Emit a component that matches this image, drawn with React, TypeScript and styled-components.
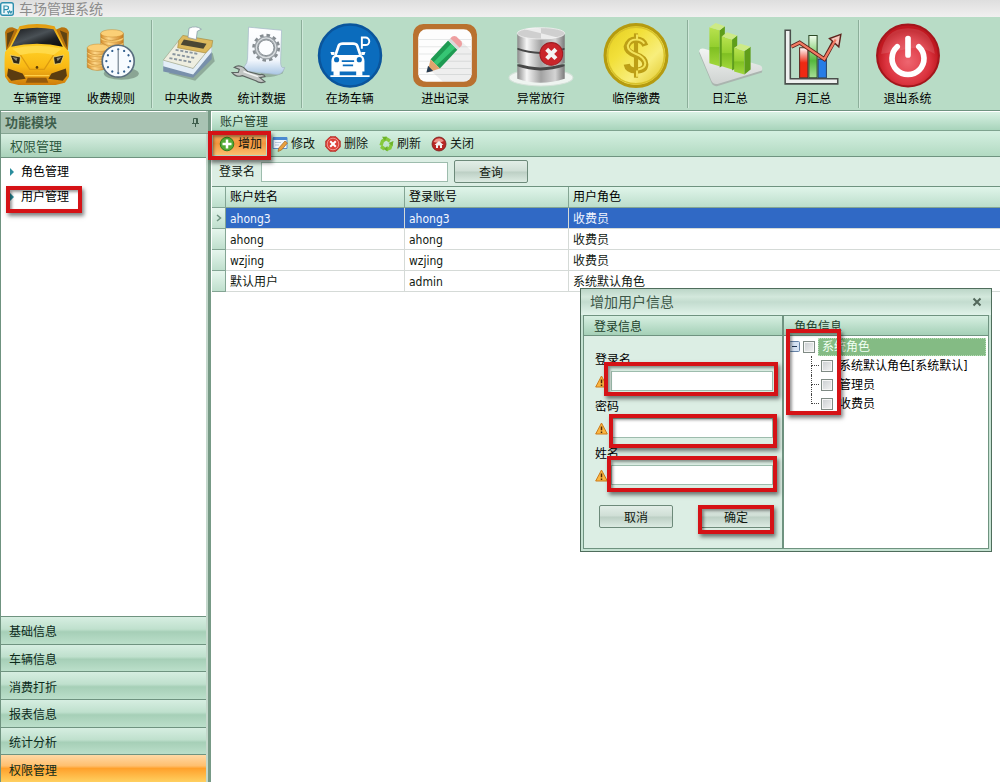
import React, { useState } from "react";
import styled, { createGlobalStyle, css } from "styled-components";

const GlobalStyle = createGlobalStyle`
  *, *::before, *::after { box-sizing: border-box; }
  body {
    margin: 0;
    background: #fff;
    color: #101810;
    font: 12px/16px "DejaVu Sans Condensed", "Noto Sans CJK SC", sans-serif;
  }
  button, input { font: inherit; color: inherit; }
  button { padding: 0; border: 0; background: none; cursor: pointer; }
  ul { list-style: none; margin: 0; padding: 0; }
  h1, h2, h3 { margin: 0; font-weight: normal; }
`;

const line = "#6f9380";

const Page = styled.div`
  position: relative;
  display: flex;
  flex-direction: column;
  min-height: 100vh;
`;

const TitleBar = styled.header`
  display: flex;
  align-items: center;
  gap: 5px;
  height: 17px;
  overflow: hidden;
  background: linear-gradient(#dedede, #f1f0f0);
  h1 { font-size: 14px; line-height: 16px; color: #8c8c8c; }
  svg { flex: none; }
`;

const Ribbon = styled.nav`
  display: flex;
  height: 94px;
  padding-top: 3px;
  background: #b8dcc6;
  border-bottom: 1px solid ${line};
`;

const RibbonGroup = styled.div<{ $width: number; $last?: boolean }>`
  display: flex;
  flex: 0 0 ${(p) => p.$width}px;
  height: 88px;
  padding-right: 3px;
  ${(p) => !p.$last && css`
    border-right: 1px solid #8cae9a;
    box-shadow: 1px 0 0 #cfe9da;
  `}
`;

const RibbonButton = styled.button`
  display: flex;
  flex: 1;
  flex-direction: column;
  align-items: center;
  gap: 3px;
  padding-top: 2px;
  color: #000;
  svg { display: block; flex: none; }
`;

const Body = styled.div`
  display: flex;
  flex: 1;
`;

const Sidebar = styled.aside`
  display: flex;
  flex-direction: column;
  flex: 0 0 211px;
  padding-top: 1px;
  border-left: 1px solid ${line};
  border-right: 3px solid #779a86;
  box-shadow: inset -2px 0 0 #c4d8cc;
`;

const SidebarTitle = styled.div`
  display: flex;
  align-items: center;
  justify-content: space-between;
  height: 22px;
  padding: 0 8px 0 4px;
  background: #a9c3b3;
  border-bottom: 1px solid #86a593;
  color: #3f5f4d;
  h2 { font-size: 13px; font-weight: bold; }
`;

const SectionTitle = styled.h3`
  height: 24px;
  margin-right: 2px;
  padding-left: 9px;
  font-size: 13px;
  line-height: 26px;
  color: #2f5a41;
  background: linear-gradient(#d8efe2, #a9d2ba);
  border-bottom: 1px solid ${line};
`;

const ModuleList = styled.ul`
  flex: 1;
  margin-right: 2px;
  padding-top: 1px;
  background: #fff;
`;

const ModuleLink = styled.a`
  display: flex;
  align-items: center;
  gap: 6px;
  height: 25px;
  padding-left: 9px;
  color: #000;
  text-decoration: none;
  &::before {
    content: "";
    border-left: 4px solid #2a8d9d;
    border-top: 4px solid transparent;
    border-bottom: 4px solid transparent;
    margin-right: 1px;
  }
`;

const NavStack = styled.div`
  display: grid;
  grid-auto-rows: 1fr;
  height: 166px;
  margin-right: 2px;
`;

const NavButton = styled.button<{ $active?: boolean }>`
  padding: 4px 0 0 8px;
  text-align: left;
  border-top: 1px solid ${line};
  color: #0c2a1a;
  background: ${(p) => p.$active
    ? "linear-gradient(#ffd9a6, #ffbf6e 40%, #ffa12c 50%, #ffd060)"
    : "linear-gradient(#d6eee1, #bfe0cd 45%, #a6cfb7 55%, #bbdfca)"};
`;

const Main = styled.main`
  display: flex;
  flex: 1;
  flex-direction: column;
  min-width: 0;
  padding: 1px 0 0 1px;
`;

const TabTitle = styled.h2`
  height: 19px;
  padding-left: 8px;
  font-size: 12px;
  line-height: 21px;
  color: #1d3f2c;
  background: linear-gradient(#d9f2e4, #a8d4bb);
  border-bottom: 1px solid #7fa38f;
`;

const ActionBar = styled.div`
  display: flex;
  align-items: center;
  height: 26px;
  padding-left: 1px;
  background: linear-gradient(#d5f0e1, #b2dac2);
  border-bottom: 1px solid ${line};
`;

const ActionButton = styled.button<{ $hot?: boolean }>`
  display: flex;
  align-items: center;
  gap: 3px;
  height: 23px;
  padding: 0 4px 0 6px;
  svg { flex: none; }
  ${(p) => p.$hot && css`
    background: linear-gradient(#f7b26b, #f2953c 50%, #fbbf70);
  `}
`;

const SearchRow = styled.form`
  display: flex;
  align-items: center;
  gap: 6px;
  height: 30px;
  padding-left: 7px;
  background: #dceee4;
  border-bottom: 1px solid ${line};
`;

const TextBox = styled.input`
  min-width: 0;
  height: 20px;
  padding: 0 3px;
  background: #fff;
  border: 1px solid #9dbcad;
  outline: none;
`;

const SearchBox = styled(TextBox)`
  width: 187px;
`;

const PushButton = styled.button`
  width: 74px;
  height: 23px;
  padding-top: 2px;
  border: 1px solid #6d8a7a;
  border-radius: 2px;
  background: linear-gradient(#e2eee7, #cfded5 48%, #bccfc4 52%, #dcebe2);
`;

const Grid = styled.table`
  width: 100%;
  table-layout: fixed;
  border-collapse: separate;
  border-spacing: 0;
  th, td {
    padding: 0 4px;
    text-align: left;
    font-weight: normal;
    white-space: nowrap;
  }
  th {
    height: 21px;
    color: #000;
    background: linear-gradient(#e0f5ea, #bcdecb);
    border-right: 1px solid #84a594;
    border-bottom: 1px solid #84a594;
  }
  th:last-child, td:last-child { border-right: 0; }
`;

const Indicator = styled.td`
  color: ${line};
  background: linear-gradient(#e6f6ed, #bfdfcd);
  border-right: 1px solid #84a594;
  border-bottom: 1px solid #84a594;
  svg { display: block; }
`;

const Row = styled.tr<{ $selected?: boolean }>`
  height: 21px;
  td + td {
    padding-top: 2px;
    border-right: 1px solid #d5dad7;
    border-bottom: 1px solid #d5dad7;
    ${(p) => p.$selected && css`
      color: #f2f6ff;
      background: #3069c5;
    `}
  }
`;

const Dialog = styled.section`
  position: absolute;
  left: 580px;
  top: 288px;
  width: 412px;
  padding: 0 2px 2px;
  background: #c6e3d3;
  border: 1px solid #4f6d5c;
`;

const DialogTitle = styled.div`
  display: flex;
  align-items: center;
  justify-content: space-between;
  height: 26px;
  margin: 0 -2px;
  padding: 0 9px;
  background: linear-gradient(#bcd6c8, #d3e8dc 30%, #c3dccf 50%, #e0f3e9);
  h2 { font-size: 14px; color: #3d5748; }
  button { display: flex; }
`;

const Panels = styled.div`
  display: grid;
  grid-template-columns: 198px 1fr;
  height: 234px;
  border: 1px solid ${line};
`;

const Panel = styled.div<{ $plain?: boolean }>`
  background: ${(p) => (p.$plain ? "#fff" : "#dceee4")};
  & + & { border-left: 2px solid ${line}; }
`;

const PanelTitle = styled.h3`
  height: 20px;
  padding-left: 10px;
  font-size: 12px;
  line-height: 22px;
  color: #1d3f2c;
  background: linear-gradient(#d6efe1, #a5d0b7);
  border-bottom: 1px solid ${line};
`;

const UserForm = styled.form`
  display: flex;
  flex-direction: column;
  gap: 8px;
  padding: 16px 9px 0 11px;
`;

const Field = styled.div`
  display: grid;
  grid-template-columns: 16px 1fr;
  row-gap: 3px;
  align-items: center;
  label { grid-column: 1 / -1; color: #000; }
`;

const FormButtons = styled.div`
  display: flex;
  justify-content: space-between;
  padding: 12px 0 0 4px;
`;

const Tree = styled.ul`
  padding: 1px 2px 0 5px;
  ul {
    margin-left: 22px;
    padding: 0;
  }
`;

const TreeRoot = styled.div`
  display: grid;
  grid-template-columns: 11px 12px 1fr;
  column-gap: 3px;
  align-items: center;
  height: 19px;
  label {
    height: 18px;
    padding-left: 3px;
    line-height: 17px;
    color: #f0fff2;
    background: #84bb84;
    border: 1px dotted #b9dfb9;
  }
`;

const Toggle = styled.button`
  display: flex;
`;

const TreeLeaf = styled.li`
  position: relative;
  display: flex;
  align-items: center;
  gap: 6px;
  height: 19px;
  padding-left: 10px;
  white-space: nowrap;
  color: #000;
  &::before {
    content: "";
    position: absolute;
    left: 0;
    top: 0;
    width: 8px;
    height: 10px;
    border-left: 1px dotted #444;
    border-bottom: 1px dotted #444;
  }
  &:not(:last-child)::after {
    content: "";
    position: absolute;
    left: 0;
    top: 10px;
    height: 9px;
    border-left: 1px dotted #444;
  }
`;

const Check = styled.input`
  appearance: none;
  flex: none;
  width: 12px;
  height: 12px;
  margin: 0;
  border: 1px solid #7f8a84;
  background: linear-gradient(135deg, #c9cdd0, #f4f4f4);
  box-shadow: inset 0 0 0 1px #f6f6f6;
  &:checked { background: #3b8a52; }
`;

const Mark = styled.span<{ $x: number; $y: number; $w: number; $h: number }>`
  position: absolute;
  left: ${(p) => p.$x}px;
  top: ${(p) => p.$y}px;
  width: ${(p) => p.$w}px;
  height: ${(p) => p.$h}px;
  border: 4px solid #d51216;
  box-shadow: 2px 3px 4px rgba(0, 0, 0, 0.5), inset 2px 2px 3px rgba(0, 0, 0, 0.4);
  pointer-events: none;
`;

/* ---------- ribbon icons, 64 x 64 ---------- */

const Icon = ({ children }: { children: React.ReactNode }) => (
  <svg width="66" height="66" viewBox="0 0 64 64" aria-hidden="true">{children}</svg>
);

const CarIcon = () => (
  <Icon>
    <defs>
      <linearGradient id="carBody" x1="0" y1="0" x2="0" y2="1">
        <stop offset="0" stopColor="#e09a10" /><stop offset=".4" stopColor="#ffcf25" /><stop offset=".7" stopColor="#f9b914" /><stop offset="1" stopColor="#cf7d0c" />
      </linearGradient>
      <linearGradient id="carGlass" x1="0" y1="0" x2="1" y2="1">
        <stop offset="0" stopColor="#15171a" /><stop offset=".45" stopColor="#4a5156" /><stop offset=".7" stopColor="#1d2022" /><stop offset="1" stopColor="#0c0c0c" />
      </linearGradient>
    </defs>
    <path d="M1 10Q2 5 8 5l7 3L6 30l-4-3zM63 10Q62 5 56 5l-7 3 9 22 4-3z" fill="#b8730e" />
    <path d="M3 11l7-3-7 17zM61 11l-7-3 7 17z" fill="#5f4312" />
    <path d="M15 4Q32 0 49 4l9 19 5 6q1 10 0 24l-4 6-9 2H14l-9-2-4-6Q0 39 1 29l5-6z" fill="url(#carBody)" />
    <path d="M16 7Q32 4 48 7l9 17q-12-3-25-3T7 24z" fill="url(#carGlass)" />
    <path d="M8 26q24-6 48 0l-8 6q-16-4-32 0z" fill="#ffe05a" opacity=".7" />
    <path d="M6 32l10 2-1 7-6-1zM58 32l-10 2 1 7 6-1z" fill="#2f2716" stroke="#fbe27e" strokeWidth=".7" />
    <path d="M8 34l5 1-1 3z M56 34l-5 1 1 3z" fill="#8d8a74" />
    <path d="M16 32l9 14h14l9-14" fill="none" stroke="#dc9a10" strokeWidth="1.200" />
    <path d="M4 45l14 5 3 5-14 2-4-5zM60 45l-14 5-3 5 14 2 4-5z" fill="#5b3c10" />
    <path d="M23 54h18l2 5H21z" fill="#955a0c" />
    <path d="M20 52h24" stroke="#ffcf45" strokeWidth="1.200" />
    <circle cx="32" cy="44" r="1.300" fill="#5a3b05" />
  </Icon>
);

const ticks = Array.from({ length: 12 }, (_, i) => i * 30);

const CoinsClockIcon = () => (
  <Icon>
    <defs>
      <linearGradient id="coin" x1="0" x2="1"><stop offset="0" stopColor="#d58a28" /><stop offset=".35" stopColor="#ffd98a" /><stop offset="1" stopColor="#ca7c1e" /></linearGradient>
    </defs>
    <ellipse cx="42" cy="50" rx="17" ry="6" fill="#000" opacity=".25" />
    {[26, 21, 16, 11].map((y) => (
      <g key={y}><path d={`M22 ${y}v4q10 6 22 0v-4`} fill="url(#coin)" stroke="#b97c25" strokeWidth=".5" /><ellipse cx="33" cy={y} rx="11" ry="3.600" fill="#fbcf76" stroke="#cb8c30" strokeWidth=".5" /></g>
    ))}
    {[40, 35, 30, 25].map((y) => (
      <g key={y}><path d={`M9 ${y}v4q9 6 21 0v-4`} fill="url(#coin)" stroke="#b97c25" strokeWidth=".5" /><ellipse cx="19.500" cy={y} rx="10.500" ry="3.600" fill="#fbcf76" stroke="#cb8c30" strokeWidth=".5" /></g>
    ))}
    <circle cx="39" cy="38" r="15.500" fill="#f7fbff" stroke="#5a6f80" strokeWidth="1.600" />
    {ticks.map((a) => (
      <circle key={a} cx="39" cy="26.500" r="1.100" fill="#35618f" transform={`rotate(${a} 39 38)`} />
    ))}
    <path d="M39 27v22" stroke="#7a8794" strokeWidth="1.200" />
  </Icon>
);

const RegisterIcon = () => (
  <Icon>
    <path d="M12 50l26 7 19-19-2-8z" fill="#000" opacity=".22" />
    <path d="M7 38l29 7 18-21v12L36 54 7 48z" fill="#7890ab" />
    <path d="M7 37l29 8 18-22v6L36 51 7 43z" fill="#e3eef7" />
    <path d="M7 37l15-19 32 5-18 22z" fill="#eeeee0" stroke="#9c9f85" strokeWidth=".6" />
    <path d="M22 18l4-5 29 5-1 6-6 6-27-5z" fill="#dcb95d" stroke="#a4863a" strokeWidth=".6" />
    <path d="M27 17l22 4-3 5-22-4z" fill="#4b4733" />
    <path d="M31 15l1-9q7-3 12 1l-4 2-1 8z" fill="#fff" stroke="#8497a5" strokeWidth=".7" />
    <path d="M19 27l22 4M16 31l22 4M13 35l22 4" stroke="#8a96a0" strokeWidth="1.800" strokeDasharray="3 1.600" />
  </Icon>
);

const GearSheetIcon = () => (
  <Icon>
    <defs><linearGradient id="sheet" x1="0" y1="0" x2="0" y2="1"><stop offset="0" stopColor="#fff" /><stop offset=".7" stopColor="#f1f6fc" /><stop offset="1" stopColor="#a9c6e4" /></linearGradient></defs>
    <path d="M22 52q18 4 30-2l2-6-6 2z" fill="#000" opacity=".2" />
    <path d="M19 5l32 3-1 30q0 8 4 6-2 7-8 7l-27-3q-6 0-4-5 3-3 3-8z" fill="url(#sheet)" stroke="#a6b8c9" strokeWidth=".7" />
    <circle cx="36" cy="25" r="12" fill="none" stroke="#858c91" strokeWidth="3" strokeDasharray="3.400 2.880" />
    <circle cx="36" cy="25" r="9.500" fill="none" stroke="#9aa1a6" strokeWidth="3.600" />
    <circle cx="36" cy="25" r="9.500" fill="none" stroke="#d8dde0" strokeWidth="1.200" />
    <circle cx="36" cy="25" r="7.600" fill="#fbfdff" stroke="#767e84" strokeWidth=".8" />
    <path d="M5 44q4-3 9 0l4 4 12 3q4-1 5 2l-5 1 5 4q-5 2-9-1l-13-5q-6 2-10-3l6 0 1-3z" fill="#c3c6c4" stroke="#5c6461" strokeWidth="1.100" />
    <path d="M14 48l14 5" stroke="#f3f5f4" strokeWidth="1.300" />
  </Icon>
);

const ParkIcon = () => (
  <Icon>
    <circle cx="32" cy="32.500" r="30" fill="#0b6cbd" stroke="#0a559c" strokeWidth="2.500" />
    <path d="M18 32l3-9q1-2 4-2h10q3 0 4 2l3 9" fill="none" stroke="#fff" strokeWidth="2.600" />
    <path d="M13 29h4v3h-3zM47 29h-4v3h3z" fill="#fff" />
    <path d="M17 32h26q3 2 3 6v10H14V38q0-4 3-6z" fill="#fff" />
    <path d="M16 46h6v6h-6zM38 46h6v6h-6z" fill="#fff" />
    <circle cx="19" cy="36.500" r="2.500" fill="#0b6cbd" /><circle cx="41" cy="36.500" r="2.500" fill="#0b6cbd" />
    <path d="M24 38h12M25 42h10" stroke="#0b6cbd" strokeWidth="1.600" />
    <path d="M13 52.500h38" stroke="#fff" strokeWidth="1.700" />
    <path d="M43.500 26V15H47a3.700 3.700 0 0 1 0 7.400h-3.500" fill="none" stroke="#fff" strokeWidth="1.900" />
  </Icon>
);

const PencilIcon = () => (
  <Icon>
    <rect x="1" y="2" width="62" height="61" rx="10" fill="#b9712f" />
    <rect x="6" y="7" width="52" height="51" rx="8" fill="#fdfdfd" />
    <path d="M6 17h52M6 24h52M6 31h52M6 38h52M6 45h52M6 51h52" stroke="#e6e8e8" strokeWidth="1" />
    <path d="M17 46l13 12h20q8 0 8-8V28L46 17z" fill="#000" opacity=".06" />
    <path d="M35 18l9 9-17 18-9-9z" fill="#1e9a52" />
    <path d="M38 21l4 4-18 17-3-3z" fill="#36c574" />
    <path d="M37 16l2-2q2-1 4 0l5 5q1 2 0 4l-2 2z" fill="#ee9fa0" />
    <path d="M35 18l2-2 9 9-2 2z" fill="#d6dad9" />
    <path d="M18 36l9 9-12 4z" fill="#e0a36d" />
    <path d="M16 44l3 3-4 1z" fill="#273b50" stroke="#273b50" strokeWidth="1.500" />
  </Icon>
);

const DatabaseIcon = () => (
  <Icon>
    <defs>
      <linearGradient id="steel" x1="0" x2="1"><stop offset="0" stopColor="#8a8a8a" /><stop offset=".2" stopColor="#f6f6f6" /><stop offset=".5" stopColor="#a2a2a2" /><stop offset=".8" stopColor="#d4d4d4" /><stop offset="1" stopColor="#7a7a7a" /></linearGradient>
    </defs>
    <ellipse cx="32" cy="54" rx="31" ry="8" fill="#eef4f0" stroke="#d5e2da" />
    <path d="M9 43v12q22 8 46 0V43z" fill="url(#steel)" />
    <path d="M9 41v2q22 8 46 0v-2z" fill="#474747" />
    <path d="M9 27v13q22 8 46 0V27z" fill="url(#steel)" />
    <path d="M9 25v2q22 8 46 0v-2z" fill="#474747" />
    <path d="M9 11v14q22 8 46 0V11z" fill="url(#steel)" />
    <ellipse cx="32" cy="11" rx="23" ry="5.500" fill="#cfcfcf" stroke="#efefef" strokeWidth=".8" />
    <path d="M32 11L16 7q8-2 16-1zM32 11l16 4q-8 2-16 1z" fill="#fff" opacity=".6" />
    <circle cx="42" cy="31" r="11" fill="#c9252b" stroke="#a01a20" strokeWidth="1" />
    <path d="M37.500 26.500l9 9M46.500 26.500l-9 9" stroke="#f4f4f4" strokeWidth="4" />
  </Icon>
);

const DollarIcon = () => (
  <Icon>
    <defs><linearGradient id="gold" x1="0" y1="0" x2="1" y2="1"><stop offset="0" stopColor="#e3ca1c" /><stop offset=".35" stopColor="#f2e03a" /><stop offset=".65" stopColor="#f8ee7c" /><stop offset="1" stopColor="#dcc01a" /></linearGradient></defs>
    <circle cx="32" cy="32.500" r="30" fill="url(#gold)" stroke="#b59b10" strokeWidth="3" />
    <circle cx="32" cy="32.500" r="27.500" fill="none" stroke="#d8c22a" strokeWidth="1.500" />
    <path d="M41 23q-2-6-9-6t-9 7q0 5 9 8t9 9q0 6-9 6-8 0-9-6" fill="none" stroke="#bd9f16" strokeWidth="6" />
    <path d="M32 11v43" stroke="#bd9f16" strokeWidth="4" />
    <path d="M40 21q-2-4-8-4t-8 6q0 5 8 8t9 9q0 5-7 6M33 12v5M33 47v6" fill="none" stroke="#f3e35a" strokeWidth="2" />
  </Icon>
);

const DayChartIcon = () => (
  <Icon>
    <defs>
      <linearGradient id="leaf" x1="0" y1="0" x2="0" y2="1"><stop offset="0" stopColor="#b9e24f" /><stop offset=".5" stopColor="#94cf2f" /><stop offset=".52" stopColor="#7fbf22" /><stop offset="1" stopColor="#a2d83c" /></linearGradient>
      <linearGradient id="plate" x1="0" y1="0" x2="0" y2="1"><stop offset="0" stopColor="#f2f4f3" /><stop offset="1" stopColor="#cfd3d1" /></linearGradient>
    </defs>
    <path d="M2 30q1-3 5-2l54 16q3 1 2 5L20 62q-4 1-6-3z" fill="#aab5af" />
    <path d="M2 28q1-3 5-2l54 16q3 1 2 5L20 60q-4 1-6-3z" fill="url(#plate)" />
    <path d="M12 5l10 3v35l-10-3z" fill="url(#leaf)" /><path d="M22 8l5-4v37l-5 3z" fill="#5f9e1a" /><path d="M12 5l6-4 9 3-5 4z" fill="#cdea86" />
    <path d="M24 14l10 3v29l-10-3z" fill="url(#leaf)" /><path d="M34 17l5-4v31l-5 3z" fill="#5f9e1a" /><path d="M24 14l5-4 10 3-5 4z" fill="#cdea86" />
    <path d="M36 25l10 3v23l-10-3z" fill="url(#leaf)" /><path d="M46 28l6-4v22l-6 5z" fill="#5f9e1a" /><path d="M36 25l6-4 10 3-6 4z" fill="#cdea86" />
  </Icon>
);

const MonthChartIcon = () => (
  <Icon>
    <defs>
      <linearGradient id="barR" x1="0" y1="0" x2="0" y2="1"><stop offset="0" stopColor="#fff" /><stop offset=".5" stopColor="#ee2a13" /></linearGradient>
      <linearGradient id="barG" x1="0" y1="0" x2="0" y2="1"><stop offset="0" stopColor="#f3fff0" /><stop offset=".6" stopColor="#54b83d" /><stop offset="1" stopColor="#a8df98" /></linearGradient>
    </defs>
    <path d="M19 25h8v29h-8z" fill="url(#barR)" stroke="#5b2820" />
    <path d="M28 13h8v41h-8z" fill="url(#barG)" stroke="#2c4a26" />
    <path d="M37 36h8v18h-8z" fill="#267de6" stroke="#27456b" />
    <path d="M5 8h5v47h46v5H5z" fill="#eef0ef" stroke="#4a4f4c" strokeWidth="1.500" />
    <path d="M11 24l8-4 24 16 11-20" fill="none" stroke="#5e231c" strokeWidth="4" />
    <path d="M59 12l-11 4 9 8z" fill="#f4c6bb" stroke="#5e231c" strokeWidth="1.400" />
    <path d="M11 24l8-4 24 16 11-19" fill="none" stroke="#f27b63" strokeWidth="2.200" />
  </Icon>
);

const PowerIcon = () => (
  <Icon>
    <defs><radialGradient id="pw" cx=".5" cy=".6"><stop offset="0" stopColor="#ee6670" /><stop offset=".7" stopColor="#dc3540" /><stop offset="1" stopColor="#c01820" /></radialGradient></defs>
    <circle cx="32" cy="32.500" r="30" fill="url(#pw)" stroke="#a3161c" strokeWidth="2" />
    <path d="M6 31Q9 6 32 6t26 25q-12-8-26-5T6 31z" fill="#fff" opacity=".12" />
    <path d="M21.500 24A15.500 15.500 0 1 0 42.500 24" fill="none" stroke="#fff" strokeWidth="5.500" strokeLinecap="round" />
    <path d="M32 16v16" stroke="#fff" strokeWidth="5.500" strokeLinecap="round" />
  </Icon>
);

/* ---------- small icons ---------- */

const Small = ({ children }: { children: React.ReactNode }) => (
  <svg width="16" height="16" viewBox="0 0 16 16" aria-hidden="true">{children}</svg>
);

const AddIcon = () => (
  <Small><circle cx="8" cy="8" r="6.800" fill="#52ab35" stroke="#317d20" /><path d="M8 3.500v9M3.500 8h9" stroke="#fff" strokeWidth="2.500" /></Small>
);
const EditIcon = () => (
  <Small><path d="M1 1.500h14v11H1z" fill="#f3f8ff" stroke="#5b8fc7" /><path d="M1 1h14v3H1z" fill="#4b8ad0" /><path d="M3 6.500h6M3 9h4" stroke="#b8cadd" /><path d="M13 5l2.500 2-6 7-3.500 1.500.8-3.500z" fill="#e9a03f" stroke="#9c672c" strokeWidth=".7" /></Small>
);
const DeleteIcon = () => (
  <Small><path d="M5 .8h6L15.200 5v6L11 15.200H5L.8 11V5z" fill="#dd4038" stroke="#b3312b" /><circle cx="8" cy="8" r="5.800" fill="none" stroke="#f4aaa4" strokeWidth=".8" /><path d="M5.200 5.200l5.600 5.600M10.800 5.200l-5.600 5.600" stroke="#fff" strokeWidth="2" /></Small>
);
const RefreshIcon = () => (
  <Small><path d="M3 9.500L4.500 5 8 2.500 12 5M13.500 8L12 12l-3.500 1.500M6.500 13L3 10.500" fill="none" stroke="#86c93c" strokeWidth="3.400" /><path d="M4 .8L9 .8 7 5zM15.500 5l-1 5-4-3zM9.500 10v5.500L5.500 13z" fill="#6db32b" /></Small>
);
const CloseDocIcon = () => (
  <Small><circle cx="8" cy="8" r="7" fill="#b72623" stroke="#7a1c1c" strokeWidth=".8" /><path d="M2.500 6A6 6 0 0 1 13 5l-5 2z" fill="#ee9289" /><path d="M3.500 9L8 5l4.500 4H11v3H9V9.500H7V12H5V9z" fill="#f2f2f2" /></Small>
);
const LogoIcon = () => (
  <svg width="14" height="14" viewBox="0 0 14 14" aria-hidden="true"><rect x=".7" y=".7" width="12.600" height="12.600" rx="2" fill="#eef8fb" stroke="#2f8fae" strokeWidth="1.400" /><path d="M4 11V4h2.500q2 0 2 1.800t-2 1.800H4M7.500 9l1 2 1.200-2 1.200 2 1-2" fill="none" stroke="#2f8fae" strokeWidth="1.200" /></svg>
);
const PinIcon = () => (
  <svg width="9" height="10" viewBox="0 0 9 10" aria-hidden="true"><path d="M2.500 .5h4v5h-4zM5.500 1v5M1 5.500h7M4.500 6v3" fill="none" stroke="#3f5f4d" /></svg>
);
const WarnIcon = () => (
  <svg width="13" height="13" viewBox="0 0 13 13" aria-hidden="true"><path d="M6.500 1L12.300 12H.7z" fill="#fbb640" stroke="#cd7b19" strokeLinejoin="round" /><path d="M6.500 4.500v3.800M6.500 9.500v1.400" stroke="#4b2a08" strokeWidth="1.500" /></svg>
);

const ribbon = [
  { width: 152, items: [["车辆管理", CarIcon], ["收费规则", CoinsClockIcon]] },
  { width: 150, items: [["中央收费", RegisterIcon], ["统计数据", GearSheetIcon]] },
  { width: 386, items: [["在场车辆", ParkIcon], ["进出记录", PencilIcon], ["异常放行", DatabaseIcon], ["临停缴费", DollarIcon]] },
  { width: 171, items: [["日汇总", DayChartIcon], ["月汇总", MonthChartIcon]] },
  { width: 100, items: [["退出系统", PowerIcon]] },
] as { width: number; items: [string, React.FC][] }[];

const actions: [string, React.FC][] = [
  ["增加", AddIcon], ["修改", EditIcon], ["删除", DeleteIcon], ["刷新", RefreshIcon], ["关闭", CloseDocIcon],
];

const sections = ["基础信息", "车辆信息", "消费打折", "报表信息", "统计分析", "权限管理"];

const accounts = [
  ["ahong3", "ahong3", "收费员"],
  ["ahong", "ahong", "收费员"],
  ["wzjing", "wzjing", "收费员"],
  ["默认用户", "admin", "系统默认角色"],
];

const fields = [
  { id: "login", label: "登录名", type: "text" },
  { id: "password", label: "密码", type: "password" },
  { id: "name", label: "姓名", type: "text" },
];

const roles = ["系统默认角色[系统默认]", "管理员", "收费员"];

export default function App() {
  const [section, setSection] = useState("权限管理");
  const [selected, setSelected] = useState(0);

  return (
    <Page>
      <GlobalStyle />
      <TitleBar><LogoIcon /><h1>车场管理系统</h1></TitleBar>
      <Ribbon>
        {ribbon.map((group, i) => (
          <RibbonGroup key={i} $width={group.width} $last={i === ribbon.length - 1}>
            {group.items.map(([label, Glyph]) => (
              <RibbonButton key={label} type="button"><Glyph />{label}</RibbonButton>
            ))}
          </RibbonGroup>
        ))}
      </Ribbon>
      <Body>
        <Sidebar>
          <SidebarTitle><h2>功能模块</h2><PinIcon /></SidebarTitle>
          <SectionTitle>{section}</SectionTitle>
          <ModuleList>
            <li><ModuleLink href="#roles">角色管理</ModuleLink></li>
            <li><ModuleLink href="#users">用户管理</ModuleLink></li>
          </ModuleList>
          <NavStack>
            {sections.map((s) => (
              <NavButton key={s} type="button" $active={s === section} onClick={() => setSection(s)}>{s}</NavButton>
            ))}
          </NavStack>
        </Sidebar>
        <Main>
          <TabTitle>账户管理</TabTitle>
          <ActionBar>
            {actions.map(([label, Glyph], i) => (
              <ActionButton key={label} type="button" $hot={i === 0}><Glyph />{label}</ActionButton>
            ))}
          </ActionBar>
          <SearchRow onSubmit={(e) => e.preventDefault()}>
            <label htmlFor="query">登录名</label>
            <SearchBox id="query" />
            <PushButton type="submit">查询</PushButton>
          </SearchRow>
          <Grid>
            <colgroup><col width="14" /><col width="179" /><col width="164" /><col /></colgroup>
            <thead>
              <tr><th /><th>账户姓名</th><th>登录账号</th><th>用户角色</th></tr>
            </thead>
            <tbody>
              {accounts.map((cells, i) => (
                <Row key={cells[0]} $selected={i === selected} onClick={() => setSelected(i)}>
                  <Indicator>
                    {i === selected && (
                      <svg width="6" height="8" viewBox="0 0 6 8" aria-hidden="true"><path d="M1 1l3.500 3L1 7" fill="none" stroke="currentColor" strokeWidth="1.500" /></svg>
                    )}
                  </Indicator>
                  {cells.map((c, n) => <td key={n}>{c}</td>)}
                </Row>
              ))}
            </tbody>
          </Grid>
        </Main>
      </Body>

      <Mark $x={6} $y={186} $w={76} $h={27} />
      <Mark $x={208} $y={131} $w={63} $h={29} />

      <Dialog role="dialog" aria-labelledby="dialog-title">
        <DialogTitle>
          <h2 id="dialog-title">增加用户信息</h2>
          <button type="button" aria-label="关闭">
            <svg width="10" height="10" viewBox="0 0 10 10" aria-hidden="true"><path d="M1.500 1.500l7 7M8.500 1.500l-7 7" stroke="#52685b" strokeWidth="2" /></svg>
          </button>
        </DialogTitle>
        <Panels>
          <Panel>
            <PanelTitle>登录信息</PanelTitle>
            <UserForm onSubmit={(e) => e.preventDefault()}>
              {fields.map((f) => (
                <Field key={f.id}>
                  <label htmlFor={f.id}>{f.label}</label>
                  <WarnIcon />
                  <TextBox id={f.id} type={f.type} />
                </Field>
              ))}
              <FormButtons>
                <PushButton type="button">取消</PushButton>
                <PushButton type="submit">确定</PushButton>
              </FormButtons>
            </UserForm>
          </Panel>
          <Panel $plain>
            <PanelTitle>角色信息</PanelTitle>
            <Tree>
              <li>
                <TreeRoot>
                  <Toggle type="button" aria-label="折叠">
                    <svg width="11" height="11" viewBox="0 0 11 11" aria-hidden="true"><rect x=".5" y=".5" width="10" height="10" rx="1" fill="#d5e2f3" stroke="#6683a8" /><path d="M3 5.500h5" stroke="#1f3554" /></svg>
                  </Toggle>
                  <Check type="checkbox" id="role-root" />
                  <label htmlFor="role-root">系统角色</label>
                </TreeRoot>
                <ul>
                  {roles.map((r, i) => (
                    <TreeLeaf key={r}>
                      <Check type="checkbox" id={`role-${i}`} />
                      <label htmlFor={`role-${i}`}>{r}</label>
                    </TreeLeaf>
                  ))}
                </ul>
              </li>
            </Tree>
          </Panel>
        </Panels>
        <Mark $x={23} $y={73} $w={174} $h={34} />
        <Mark $x={28} $y={125} $w={168} $h={34} />
        <Mark $x={26} $y={167} $w={170} $h={36} />
        <Mark $x={117} $y={216} $w={76} $h={29} />
        <Mark $x={205} $y={40} $w={55} $h={86} />
      </Dialog>
    </Page>
  );
}
